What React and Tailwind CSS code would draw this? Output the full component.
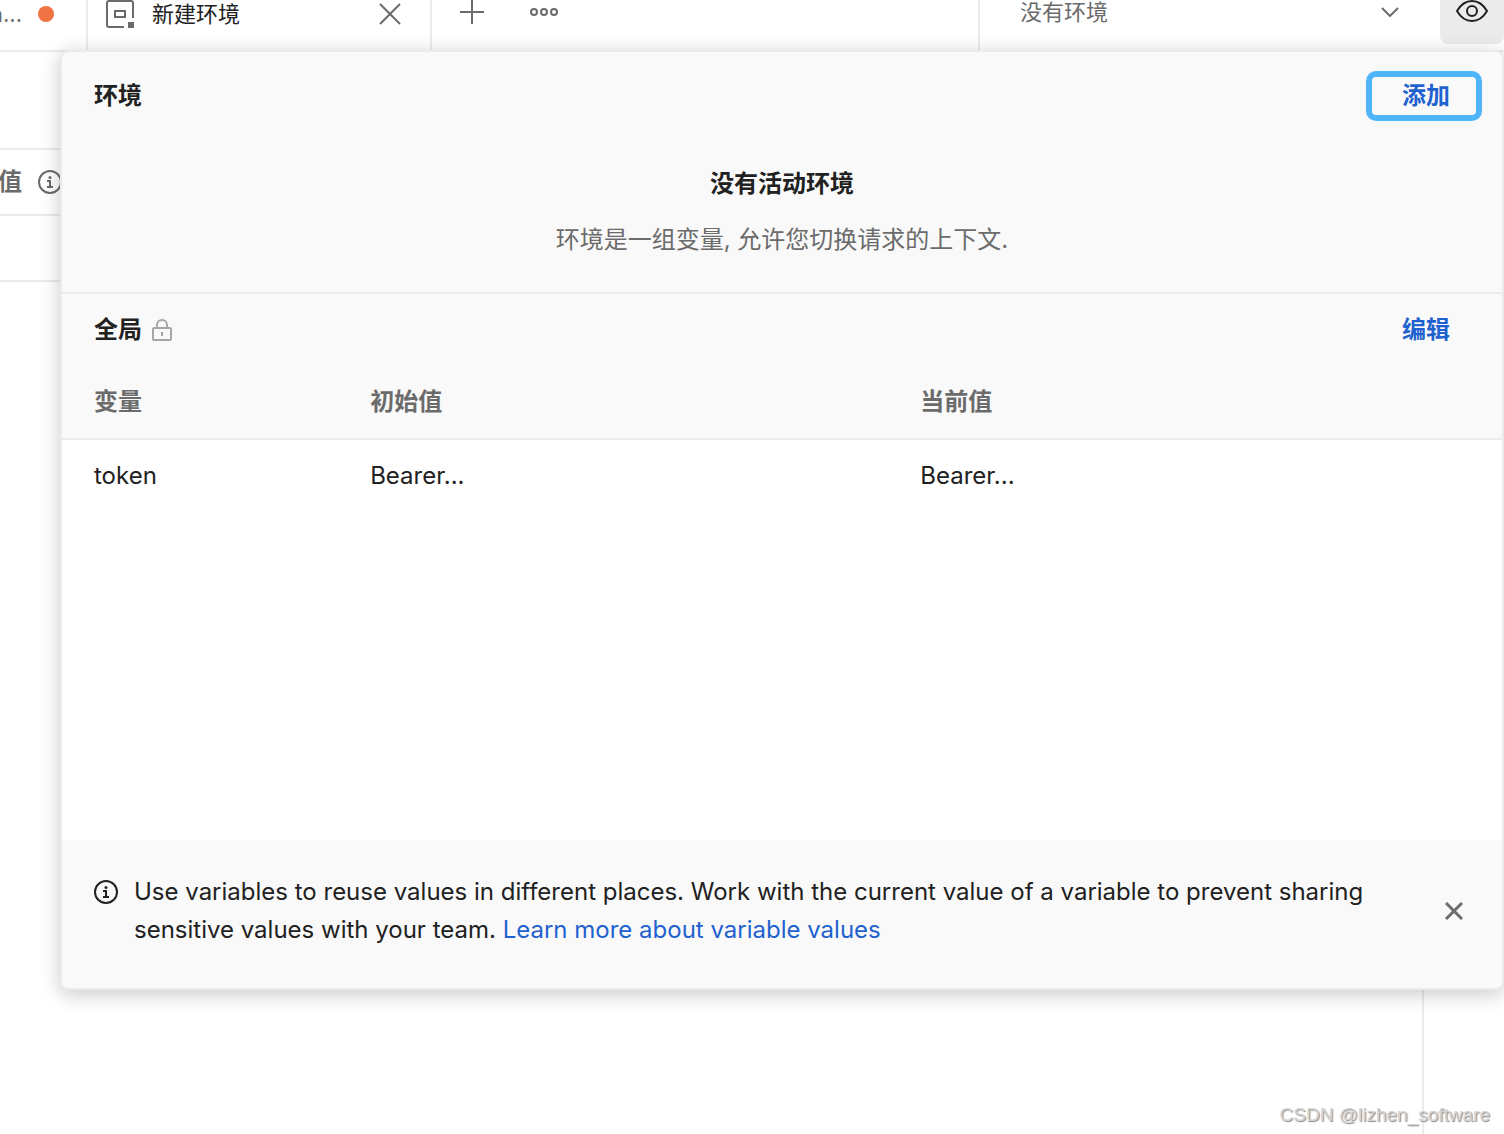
import { useState } from 'react';

const variables = [
  { name: 'token', initial: 'Bearer...', current: 'Bearer...' },
];

function EnvironmentIcon() {
  return (
    <svg width="28" height="28" viewBox="0 0 28 28" fill="none" stroke="#6b6b6b" strokeWidth="2" aria-hidden="true">
      <path d="M18 27H3a2 2 0 0 1-2-2V3a2 2 0 0 1 2-2h22a2 2 0 0 1 2 2v15" />
      <rect x="9" y="11" width="10" height="6" />
      <rect x="22" y="22" width="6" height="6" fill="#6b6b6b" stroke="none" />
    </svg>
  );
}

function CrossIcon({ size, strokeWidth }) {
  return (
    <svg width={size} height={size} viewBox={`0 0 ${size} ${size}`} fill="none" stroke="#6b6b6b" strokeWidth={strokeWidth} aria-hidden="true">
      <path d={`M1 1L${size - 1} ${size - 1}M${size - 1} 1L1 ${size - 1}`} />
    </svg>
  );
}

function PlusIcon() {
  return (
    <svg width="24" height="24" viewBox="0 0 24 24" fill="none" stroke="#6b6b6b" strokeWidth="2" aria-hidden="true">
      <path d="M12 0v24M0 12h24" />
    </svg>
  );
}

function DotsIcon() {
  return (
    <svg width="28" height="8" viewBox="0 0 28 8" fill="none" stroke="#6b6b6b" strokeWidth="2" aria-hidden="true">
      <circle cx="4" cy="4" r="3" />
      <circle cx="14" cy="4" r="3" />
      <circle cx="24" cy="4" r="3" />
    </svg>
  );
}

function ChevronIcon() {
  return (
    <svg className="pointer-events-none absolute right-[41px] top-[7px]" width="18" height="10" viewBox="0 0 18 10" fill="none" stroke="#6b6b6b" strokeWidth="2" aria-hidden="true">
      <path d="M1 1l8 8 8-8" />
    </svg>
  );
}

function EyeIcon() {
  return (
    <svg width="32" height="22" viewBox="0 0 32 22" fill="none" stroke="#212121" strokeWidth="2" aria-hidden="true">
      <path d="M1 11C4.500 5 9.500 1 16 1s11.500 4 15 10c-3.500 6-8.500 10-15 10S4.500 17 1 11z" strokeLinejoin="round" />
      <circle cx="16" cy="11" r="5" />
    </svg>
  );
}

function InfoIcon({ color }) {
  return (
    <svg className="shrink-0" width="24" height="24" viewBox="0 0 24 24" fill="none" stroke={color} strokeWidth="2" aria-hidden="true">
      <circle cx="12" cy="12" r="11" />
      <path d="M9 11h3v6M9 17h6" />
      <circle cx="12" cy="7.500" r="1.500" fill={color} stroke="none" />
    </svg>
  );
}

function LockIcon() {
  return (
    <svg width="20" height="22" viewBox="0 0 20 22" fill="none" stroke="#a6a6a6" strokeWidth="2" aria-hidden="true">
      <rect x="1" y="9" width="18" height="12" rx="1" />
      <path d="M5 9V6a5 5 0 0 1 10 0v3M10 13v4" />
    </svg>
  );
}

function TabBar({ open, onToggle }) {
  return (
    <header className="flex h-[52px] items-start border-b-2 border-[#ebebeb] text-[22px] leading-7">
      <div className="flex h-full w-[88px] shrink-0 items-start justify-end gap-4 overflow-hidden border-r-2 border-[#ebebeb] pr-8">
        <span className="text-[#6b6b6b]">n...</span>
        <span className="mt-[6px] size-4 shrink-0 rounded-full bg-[#f07346]" />
      </div>
      <div className="flex h-full w-[344px] shrink-0 items-start border-r-2 border-[#ebebeb] pl-[18px] pr-[29px]">
        <a href="#environment" className="flex flex-1 items-center gap-[18px] text-[#212121]">
          <EnvironmentIcon />
          新建环境
        </a>
        <button type="button" aria-label="关闭" className="flex h-7 items-center">
          <CrossIcon size={22} strokeWidth={2} />
        </button>
      </div>
      <div className="flex h-6 flex-1 items-center gap-[46px] pl-7">
        <button type="button" aria-label="新建"><PlusIcon /></button>
        <button type="button" aria-label="更多"><DotsIcon /></button>
      </div>
      <div className="relative h-full w-[462px] shrink-0 border-l-2 border-[#ebebeb]">
        <select aria-label="环境" className="block h-6 w-full appearance-none bg-transparent pl-10 leading-6 text-[#6b6b6b] outline-none">
          <option>没有环境</option>
        </select>
        <ChevronIcon />
      </div>
      <button
        type="button"
        aria-label="查看环境"
        aria-expanded={open}
        onClick={onToggle}
        className="flex h-11 w-16 shrink-0 justify-center rounded-b-lg bg-[#ebebeb]"
      >
        <EyeIcon />
      </button>
    </header>
  );
}

function QuickLook() {
  const [showTip, setShowTip] = useState(true);

  return (
    <section className="absolute left-[60px] right-0 top-[50px] z-10 overflow-hidden rounded-lg border-2 border-[#ebebeb] bg-[#f9f9f9] shadow-[0_4px_20px_rgba(0,0,0,0.22)]">
      {/* Active environment */}
      <div className="border-b-2 border-[#ebebeb] pb-[34px]">
        <div className="flex h-[88px] items-center justify-between pl-8 pr-5">
          <h2 className="font-semibold">环境</h2>
          <button type="button" className="h-[50px] rounded-[10px] border-[6px] border-[#4fb4f9] pl-[30px] pr-[26px] font-semibold leading-9 text-[#1f62cf]">
            添加
          </button>
        </div>
        <div className="pt-[26px] text-center leading-9">
          <h3 className="font-semibold">没有活动环境</h3>
          <p className="mt-5 text-[#6b6b6b]">环境是一组变量, 允许您切换请求的上下文.</p>
        </div>
      </div>

      {/* Globals */}
      <div className="flex h-[72px] items-center justify-between pl-8 pr-[52px]">
        <h2 className="flex items-center gap-[10px] font-semibold">
          全局
          <LockIcon />
        </h2>
        <button type="button" className="font-semibold text-[#1f62cf]">编辑</button>
      </div>
      <div className="min-h-[474px] bg-white">
        <table className="w-full table-fixed border-separate border-spacing-0 text-left">
          <thead className="bg-[#f9f9f9] text-[#6b6b6b]">
            <tr className="h-[74px]">
              <th className="w-[21.4%] border-b-2 border-[#ebebeb] pl-8 font-semibold">变量</th>
              <th className="w-[38.2%] border-b-2 border-[#ebebeb] font-semibold">初始值</th>
              <th className="border-b-2 border-[#ebebeb] font-semibold">当前值</th>
            </tr>
          </thead>
          <tbody>
            {variables.map((variable) => (
              <tr key={variable.name} className="h-[72px]">
                <td className="pl-8">{variable.name}</td>
                <td>{variable.initial}</td>
                <td>{variable.current}</td>
              </tr>
            ))}
          </tbody>
        </table>
      </div>

      {showTip && (
        <div className="flex items-center justify-between pb-[39px] pl-8 pr-[39px] pt-[33px]">
          <div className="flex max-w-[1300px] gap-4 leading-[38px]">
            <span className="flex h-[38px] items-center">
              <InfoIcon color="#212121" />
            </span>
            <p>
              Use variables to reuse values in different places. Work with the current value of a variable to prevent sharing
              sensitive values with your team.{' '}
              <a href="#variable-values" className="text-[#1f62cf]">Learn more about variable values</a>
            </p>
          </div>
          <button type="button" aria-label="关闭提示" onClick={() => setShowTip(false)}>
            <CrossIcon size={18} strokeWidth={3} />
          </button>
        </div>
      )}
    </section>
  );
}

export default function App() {
  const [open, setOpen] = useState(true);

  return (
    <div className="relative flex min-h-screen flex-col overflow-hidden bg-white font-['Inter','Noto_Sans_CJK_SC',sans-serif] text-2xl text-[#212121]">
      <TabBar open={open} onToggle={() => setOpen(!open)} />
      <div className="flex flex-1">
        <main className="flex-1 text-[#6b6b6b]">
          <div className="h-[98px] border-b-2 border-[#ebebeb]" />
          <div className="flex h-[66px] items-center gap-4 border-b-2 border-[#ebebeb] font-semibold">
            <span className="-ml-[2px]">值</span>
            <InfoIcon color="#6b6b6b" />
          </div>
          <div className="h-[66px] border-b-2 border-[#ebebeb]" />
        </main>
        <aside className="w-[82px] border-l-2 border-[#ebebeb]" />
      </div>
      {open && <QuickLook />}
      <p className="absolute bottom-[5px] right-[14px] z-20 font-['Liberation_Sans',sans-serif] text-[19px] leading-7 text-[#d4d4d4] [text-shadow:1px_1px_1px_#888]">
        CSDN @lizhen_software
      </p>
    </div>
  );
}
